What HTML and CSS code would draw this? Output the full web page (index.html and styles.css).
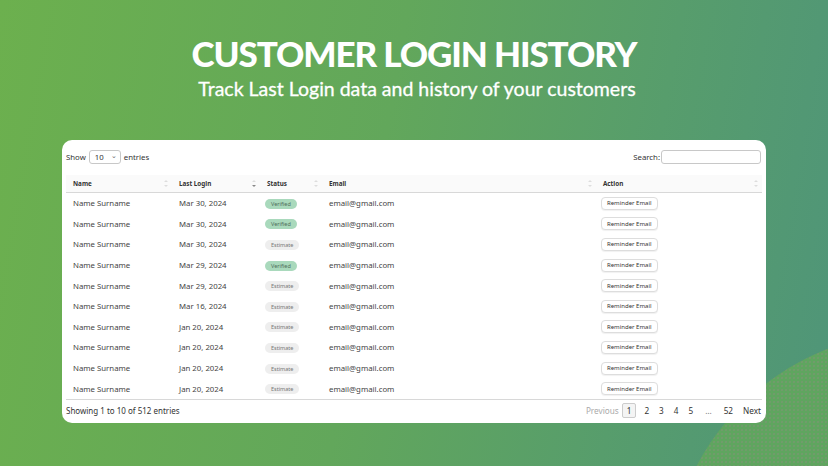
FILE: index.html
```html
<!DOCTYPE html>
<html lang="en">
<head>
  <meta charset="UTF-8" />
  <meta name="viewport" content="width=device-width, initial-scale=1.0"/>
  <title>Customer Login History</title>
  <link rel="stylesheet" href="styles.css">
</head>
<body>
<div class="page">
  <div class="blob"></div>

  <header class="hero">
    <h1>CUSTOMER LOGIN HISTORY</h1>
    <p>Track Last Login data and history of your customers</p>
  </header>

  <div class="card">
    <div class="toolbar">
      <label class="length">Show
        <span class="select">10 <span class="caret">&#8964;</span></span>
        entries</label>
      <label class="search">Search: <span class="search-box"></span></label>
    </div>

    <table class="logins">
      <colgroup>
        <col class="c-name"><col class="c-date"><col class="c-status"><col class="c-email"><col class="c-action">
      </colgroup>
      <thead>
        <tr>
          <th>Name <span class="sort"></span></th>
          <th>Last Login <span class="sort desc"></span></th>
          <th>Status <span class="sort"></span></th>
          <th>Email <span class="sort"></span></th>
          <th>Action <span class="sort"></span></th>
        </tr>
      </thead>
      <tbody>
        <tr><td>Name Surname</td><td>Mar 30, 2024</td><td><span class="badge ok">Verified</span></td><td>email@gmail.com</td><td><button>Reminder Email</button></td></tr>
        <tr><td>Name Surname</td><td>Mar 30, 2024</td><td><span class="badge ok">Verified</span></td><td>email@gmail.com</td><td><button>Reminder Email</button></td></tr>
        <tr><td>Name Surname</td><td>Mar 30, 2024</td><td><span class="badge">Estimate</span></td><td>email@gmail.com</td><td><button>Reminder Email</button></td></tr>
        <tr><td>Name Surname</td><td>Mar 29, 2024</td><td><span class="badge ok">Verified</span></td><td>email@gmail.com</td><td><button>Reminder Email</button></td></tr>
        <tr><td>Name Surname</td><td>Mar 29, 2024</td><td><span class="badge">Estimate</span></td><td>email@gmail.com</td><td><button>Reminder Email</button></td></tr>
        <tr><td>Name Surname</td><td>Mar 16, 2024</td><td><span class="badge">Estimate</span></td><td>email@gmail.com</td><td><button>Reminder Email</button></td></tr>
        <tr><td>Name Surname</td><td>Jan 20, 2024</td><td><span class="badge">Estimate</span></td><td>email@gmail.com</td><td><button>Reminder Email</button></td></tr>
        <tr><td>Name Surname</td><td>Jan 20, 2024</td><td><span class="badge">Estimate</span></td><td>email@gmail.com</td><td><button>Reminder Email</button></td></tr>
        <tr><td>Name Surname</td><td>Jan 20, 2024</td><td><span class="badge">Estimate</span></td><td>email@gmail.com</td><td><button>Reminder Email</button></td></tr>
        <tr><td>Name Surname</td><td>Jan 20, 2024</td><td><span class="badge">Estimate</span></td><td>email@gmail.com</td><td><button>Reminder Email</button></td></tr>
      </tbody>
    </table>

    <div class="footer">
      <span class="info">Showing 1 to 10 of 512 entries</span>
      <nav class="pages">
        <span class="off">Previous</span>
        <span class="current">1</span>
        <span>2</span>
        <span>3</span>
        <span>4</span>
        <span>5</span>
        <span class="dots">…</span>
        <span>52</span>
        <span class="last">Next</span>
      </nav>
    </div>
  </div>
</div>
</body>
</html>
```

FILE: styles.css
```css
body {
  margin: 0;
  font-family: "Noto Sans", "Open Sans", sans-serif;
  color: #444;
}

.page {
  position: relative;
  height: 466px;
  overflow: hidden;
  background: linear-gradient(100deg, #6cb04e 0%, #62a75b 45%, #579d6c 75%, #4f9579 100%);
}

.blob {
  position: absolute;
  left: 668px;
  top: 332px;
  width: 500px;
  height: 500px;
  border-radius: 50%;
  background-color: #5fa55f;
  background-image: radial-gradient(rgba(200, 110, 170, 0.35) 0.6px, transparent 0.8px);
  background-size: 4px 4px;
}

.hero {
  position: relative;
  text-align: center;
  color: #fff;
  padding-top: 33px;
  font-family: Lato, sans-serif;
}

.hero h1 {
  margin: 0;
  font-size: 35px;
  font-weight: 900;
  line-height: 40px;
  letter-spacing: -1.1px;
}

.hero p {
  margin: 4px 0 0;
  font-size: 19.5px;
  font-weight: 400;
  line-height: 24px;
  padding-left: 6px;
  -webkit-text-stroke: 0.3px #fff;
}

.card {
  position: relative;
  margin: 39px 62px 0;
  background: #fff;
  border-radius: 10px;
  padding: 9px 4px 3px;
  font-size: 7.8px;
}

.toolbar {
  display: flex;
  justify-content: space-between;
  align-items: center;
  height: 16px;
  margin-bottom: 10px;
}

.length, .search {
  display: flex;
  align-items: center;
  gap: 3px;
  color: #333;
}

.select {
  display: inline-flex;
  align-items: center;
  justify-content: space-between;
  width: 22px;
  height: 12px;
  padding: 0 3px 0 5px;
  border: 1px solid #c8c8c8;
  border-radius: 3px;
}

.caret {
  font-size: 7px;
  line-height: 4px;
  margin-top: -3px;
  color: #666;
}

.search {
  gap: 1px;
  margin-right: 1px;
}

.search-box {
  width: 98px;
  height: 12px;
  border: 1px solid #c8c8c8;
  border-radius: 3px;
}

.logins {
  width: 100%;
  border-collapse: collapse;
  table-layout: fixed;
}

.c-name { width: 106px; }
.c-date { width: 88px; }
.c-status { width: 62px; }
.c-email { width: 274px; }

.logins th {
  position: relative;
  text-align: left;
  font-size: 6.3px;
  font-weight: 700;
  color: #333;
  height: 17px;
  padding: 0 7px;
  background: #fafafa;
  border-bottom: 1px solid #d8d8d8;
}

.sort {
  position: absolute;
  right: 4px;
  top: 5px;
  width: 4px;
  height: 7px;
}

.sort::before, .sort::after {
  content: "";
  position: absolute;
  left: 0;
  border-left: 2px solid transparent;
  border-right: 2px solid transparent;
}

.sort::before {
  top: 0;
  border-bottom: 2.5px solid #ddd;
}

.sort::after {
  bottom: 0;
  border-top: 2.5px solid #ddd;
}

.sort.desc::after {
  border-top-color: #888;
}

.logins td {
  height: 20.6px;
  padding: 0 7px;
  color: #444;
  white-space: nowrap;
}

.logins tbody tr:last-child td {
  border-bottom: 1px solid #d8d8d8;
}

.badge {
  display: inline-block;
  padding: 1px 6px;
  border-radius: 6px;
  background: #eee;
  color: #777;
  font-size: 5.5px;
  line-height: 8px;
  margin-left: -2px;
}

.badge.ok {
  background: #a9d9bc;
  color: #4f6f5c;
}

button {
  font-family: inherit;
  font-size: 6px;
  color: #333;
  background: #fff;
  border: 1px solid #ddd;
  border-radius: 4px;
  height: 13px;
  padding: 0 5px;
  margin-left: -2px;
  box-shadow: 0 1px 1px rgba(0, 0, 0, 0.06);
}

.footer {
  display: flex;
  justify-content: space-between;
  align-items: center;
  height: 18px;
  padding-top: 2px;
  color: #333;
  font-size: 8px;
}

.pages {
  display: flex;
  align-items: center;
  font-size: 8.2px;
}

.pages span {
  padding: 0 5px;
}

.pages .off {
  color: #aaa;
  padding-right: 3px;
}

.pages .current {
  border: 1px solid #ccc;
  background: #f4f4f4;
  padding: 1px 4px;
  border-radius: 2px;
  margin-right: 3px;
}

.pages .dots {
  padding: 0 7px;
  color: #777;
}

.pages .last {
  padding-right: 1px;
}
```
